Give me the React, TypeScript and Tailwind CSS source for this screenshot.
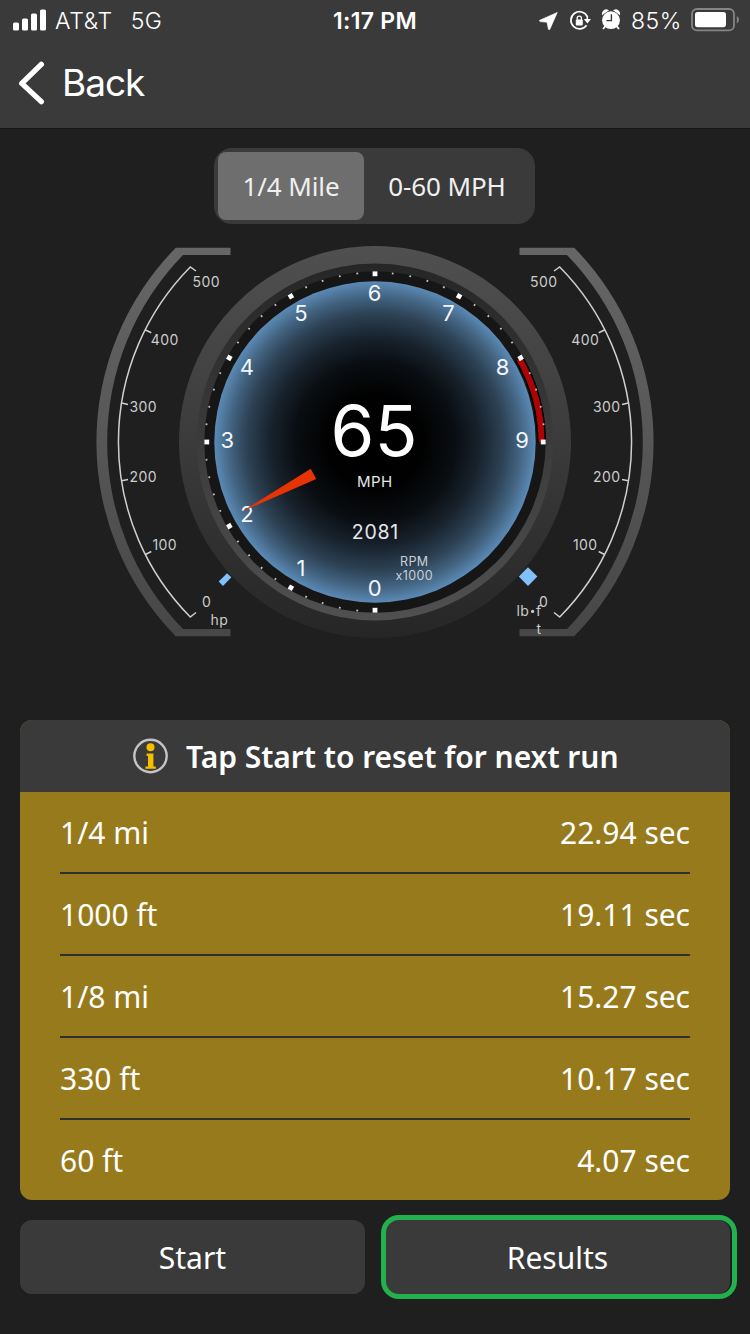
import React from "react";

const CX = 375;
const CY = 442;

const polar = (r: number, deg: number) => {
  const a = (deg * Math.PI) / 180;
  return { x: CX - r * Math.sin(a), y: CY + r * Math.cos(a) };
};

function StatusBar() {
  return (
    <div className="grid h-10 grid-cols-3 items-center font-['Inter','Liberation_Sans',sans-serif] text-[23px] leading-[42px] text-white">
      <div className="flex items-center pl-[13px]">
        <svg width="33" height="22" viewBox="0 0 33 22" className="relative -top-px mr-[9px]" fill="#fff">
          <rect x="0" y="13.5" width="6" height="8" rx="1.6" />
          <rect x="9" y="9.5" width="6" height="12" rx="1.6" />
          <rect x="18" y="4.5" width="6" height="17" rx="1.6" />
          <rect x="27" y="0.5" width="6" height="21" rx="1.6" />
        </svg>
        <span className="font-[350] tracking-[0.7px]">AT&amp;T</span>
        <span className="ml-[18px] font-[350] tracking-[0.3px]">5G</span>
      </div>
      <div className="text-center text-[23px] font-semibold tracking-[0.3px]">1:17 PM</div>
      <div className="flex items-center justify-end pr-[11px]">
        <svg width="82" height="24" viewBox="539 8 82 24" className="relative -top-px">
          <path d="M557.3 12.4 L539.6 20.3 Q539 21.2 540 21.6 L547 22.2 L548.4 29.3 Q549.2 30.4 549.9 29.2 Z" fill="#fff" stroke="#fff" strokeWidth="0.6" strokeLinejoin="round" />
          <path d="M587.3 16.6 A8.6 8.6 0 1 0 586.6 25.2" fill="none" stroke="#fff" strokeWidth="1.7" />
          <path d="M583.8 18.9 H591 L587.4 23.6 Z" fill="#fff" />
          <path d="M587.3 16 V20" stroke="#fff" strokeWidth="1.6" />
          <rect x="575.8" y="19.6" width="7" height="5.8" rx="0.9" fill="#fff" />
          <path d="M577.2 20 V18.2 A2.1 2.1 0 0 1 581.4 18.2 V20" fill="none" stroke="#fff" strokeWidth="1.3" />
          <circle cx="611" cy="20.2" r="8.9" fill="#fff" />
          <path d="M602.6 14 A3.6 3.6 0 0 1 607.6 10.4 Z M619.4 14 A3.6 3.6 0 0 0 614.4 10.4 Z" fill="#fff" stroke="#fff" strokeWidth="1.4" />
          <path d="M605.2 26.4 L603 29 M616.8 26.4 L619 29" stroke="#fff" strokeWidth="1.8" />
          <path d="M611.4 14.2 V20.6 H606.4" fill="none" stroke="#3a3a3a" strokeWidth="1.4" />
        </svg>
        <span className="ml-[10px] font-[350] tracking-[0.6px]">85%</span>
        <svg width="48" height="24" viewBox="691 8 48 24" className="relative -top-px ml-[9px]">
          <rect x="692" y="9" width="42" height="21.4" rx="5" fill="none" stroke="#858585" strokeWidth="1.8" />
          <rect x="695" y="12" width="31" height="15.2" rx="2.6" fill="#fff" />
          <path d="M736.8 16 Q739 17 739 19.7 Q739 22.4 736.8 23.4 Z" fill="#858585" />
        </svg>
      </div>
    </div>
  );
}

function Header() {
  return (
    <header className="h-[129px] border-b border-[#171717] bg-[#3a3a3a]">
      <StatusBar />
      <button className="flex h-[86px] items-center pl-[18px] text-white">
        <svg width="27" height="44" viewBox="0 0 27 44" className="mr-[18px]">
          <path d="M23.3 3.4 L3.8 22.4 L23.3 40.6" fill="none" stroke="#fff" strokeWidth="5.4" strokeLinecap="round" strokeLinejoin="round" />
        </svg>
        <span className="-ml-px pb-[2px] font-['Inter','Liberation_Sans',sans-serif] text-[37px] leading-none font-[380] tracking-[-1px]">Back</span>
      </button>
    </header>
  );
}

function ModeSwitch() {
  return (
    <div className="ml-[214px] mt-[19px] flex h-[76px] w-[321px] rounded-[18px] bg-[#3a3a3a] p-1 text-[26px] font-[380] tracking-[-0.1px] text-[#f0f0f0]">
      <button className="w-[146px] rounded-lg bg-[#6e6e6e]">1/4 Mile</button>
      <button className="flex-1 pr-px">0-60 MPH</button>
    </div>
  );
}

const sideLabels = [
  { text: "500", x: 206, y: 282 },
  { text: "400", x: 164.5, y: 340 },
  { text: "300", x: 143, y: 407 },
  { text: "200", x: 143, y: 477 },
  { text: "100", x: 164.5, y: 545 },
  { text: "0", x: 206.3, y: 602 },
];

function SideFrame() {
  return (
    <>
      <path
        d="M230.5 247.7 H175.8 A277.5 277.5 0 0 0 175.8 636.3 H230.5 V629 H183 A268.5 268.5 0 0 1 183 255 H230.5 Z"
        fill="url(#frame)"
      />
      <path
        d="M196 271 L190.3 267 A249 249 0 0 0 190.3 617 L196 612.5 M145.5 330 L151.3 332.8 M121.7 403 L128 404.6 M121.7 480.8 L128 479.6 M145.5 554.5 L151.3 551.5"
        fill="none"
        stroke="#cfcfcf"
        strokeWidth="1.5"
      />
    </>
  );
}

function Gauges() {
  const a8 = polar(166.5, 240);
  const a9 = polar(166.5, 270);
  const ticks = Array.from({ length: 46 }, (_, i) => i * 6);
  const digits = Array.from({ length: 10 }, (_, i) => i);
  return (
    <svg width="750" height="416" viewBox="0 234 750 416" className="mt-[10px] block font-['Inter','Liberation_Sans',sans-serif]">
      <defs>
        <linearGradient id="frame" x1="0" y1="248" x2="0" y2="636" gradientUnits="userSpaceOnUse">
          <stop offset="0" stopColor="#666666" />
          <stop offset="1" stopColor="#474747" />
        </linearGradient>
        <linearGradient id="bezel" x1="0" y1="0" x2="0" y2="1">
          <stop offset="0" stopColor="#505050" />
          <stop offset="1" stopColor="#262626" />
        </linearGradient>
        <linearGradient id="rim" x1="0" y1="0" x2="0" y2="1">
          <stop offset="0" stopColor="#262626" />
          <stop offset="1" stopColor="#505050" />
        </linearGradient>
        <radialGradient id="face">
          <stop offset="0" stopColor="#000000" />
          <stop offset="0.3" stopColor="#010101" />
          <stop offset="0.5" stopColor="#0a0e12" />
          <stop offset="0.65" stopColor="#18222c" />
          <stop offset="0.8" stopColor="#2d4255" />
          <stop offset="0.9" stopColor="#42627f" />
          <stop offset="1" stopColor="#5b8ab5" />
        </radialGradient>
      </defs>

      <SideFrame />
      <g transform="translate(750 0) scale(-1 1)">
        <SideFrame />
      </g>

      <circle cx={CX} cy={CY} r="196" fill="url(#bezel)" />
      <circle cx={CX} cy={CY} r="178.4" fill="url(#rim)" />
      <circle cx={CX} cy={CY} r="170.7" fill="#161616" />
      <circle cx={CX} cy={CY} r="160.7" fill="url(#face)" />
      <path d={`M${a8.x} ${a8.y} A166.5 166.5 0 0 1 ${a9.x} ${a9.y}`} fill="none" stroke="#000" strokeWidth="9" />
      <path d={`M${a8.x} ${a8.y} A166.5 166.5 0 0 1 ${a9.x} ${a9.y}`} fill="none" stroke="#ad0505" strokeWidth="6" />

      {ticks.map((deg) => {
        const major = deg % 30 === 0;
        const s = major ? 4.8 : 1.8;
        const p = polar(major ? 168.2 : 169.4, deg);
        return (
          <rect
            key={deg}
            x={p.x - s / 2}
            y={p.y - s / 2}
            width={s}
            height={s}
            fill={major ? "#fff" : "#c5c5c5"}
            transform={`rotate(${deg} ${p.x} ${p.y})`}
          />
        );
      })}

      <g fill="#f3f6f9" fontSize="22" fontWeight="380" textAnchor="middle">
        {digits.map((n) => {
          const p = polar(147.5, n * 30);
          return (
            <text key={n} x={p.x - 0.3} y={p.y + 6.4}>
              {n}
            </text>
          );
        })}
      </g>

      <polygon points="241.5,511.7 310.7,468.7 316.2,479" fill="#e63404" />

      <g textAnchor="middle" fill="#fff">
        <text x="374" y="455.6" fontSize="69.5" fontWeight="370" textLength="87" lengthAdjust="spacingAndGlyphs">65</text>
        <text x="374.7" y="487.4" fontSize="15" fill="#e6e6e6" letterSpacing="0.4">MPH</text>
        <text x="375.3" y="538.6" fontSize="19.5" fill="#e6e8ea" letterSpacing="0.7" fontWeight="380">2081</text>
        <g fill="#c9d0d6" fontSize="12.5" letterSpacing="0.4">
          <text x="414.3" y="565.7">RPM</text>
          <text x="414.3" y="579.5">x1000</text>
        </g>
      </g>

      <polygon points="227,573.3 231.4,577.3 223,586 218.7,581.5" fill="#80c0ff" />
      <polygon points="528,567.2 537.4,576.4 528,586 518.8,576.4" fill="#80c0ff" />

      <g fill="#cccccc" fontSize="14" textAnchor="middle" letterSpacing="0.4">
        {sideLabels.map((l) => (
          <React.Fragment key={l.text}>
            <text x={l.x + 0.3} y={l.y + 5}>{l.text}</text>
            <text x={749.8 - l.x} y={l.y + 5}>{l.text}</text>
          </React.Fragment>
        ))}
        <text x="219.3" y="624.6">hp</text>
        <text x="516.5" y="616" textAnchor="start">lb</text>
        <circle cx="532.6" cy="611.4" r="1.6" />
        <text x="538.8" y="616">f</text>
        <text x="538.9" y="633.7">t</text>
      </g>
    </svg>
  );
}

const results = [
  ["1/4 mi", "22.94 sec"],
  ["1000 ft", "19.11 sec"],
  ["1/8 mi", "15.27 sec"],
  ["330 ft", "10.17 sec"],
  ["60 ft", "4.07 sec"],
];

function ResultsCard() {
  return (
    <section className="mx-5 mt-[70px] h-[480px] overflow-hidden rounded-xl bg-[#977a1c] text-white">
      <div className="flex h-[72px] items-center bg-[#3a3a3a] pl-[113px]">
        <svg width="35" height="36" viewBox="0 0 35 36" className="mr-[18px]">
          <circle cx="17.5" cy="18" r="16.2" fill="none" stroke="#c4c4c4" strokeWidth="2.4" />
          <circle cx="17.5" cy="9.3" r="4" fill="#f7be00" />
          <path d="M13.6 15.5 H20.4 V28.4 H22.8 V30.8 H12.4 V28.4 H15 V18 H13.6 Z" fill="#f7be00" />
        </svg>
        <span className="pt-px text-[30px] font-semibold leading-none tracking-[-0.03px]">Tap Start to reset for next run</span>
      </div>
      <ul className="px-10 text-[30px] font-[370] tracking-[-0.03px]">
        {results.map(([label, value]) => (
          <li key={label} className="flex h-[82px] items-center justify-between border-b-2 border-[#2f2f2f] last:h-20 last:border-b-0">
            <span>{label}</span>
            <span>{value}</span>
          </li>
        ))}
      </ul>
    </section>
  );
}

export default function App() {
  return (
    <div className="h-[1334px] w-[750px] overflow-hidden bg-[#1f1f1f] font-['Noto_Sans','Open_Sans',sans-serif]">
      <Header />
      <ModeSwitch />
      <Gauges />
      <ResultsCard />
      <div className="mx-5 mt-5 grid grid-cols-2 gap-5 text-[30px] font-[370] text-white">
        <button className="h-[74px] rounded-xl bg-[#3a3a3a]">Start</button>
        <button className="relative h-[74px] rounded-xl bg-[#3a3a3a]">
          Results
          <span className="absolute -bottom-[5px] -left-[4px] -right-[7px] -top-[5px] rounded-[18px] border-[5px] border-[#22b14c]" />
        </button>
      </div>
    </div>
  );
}
